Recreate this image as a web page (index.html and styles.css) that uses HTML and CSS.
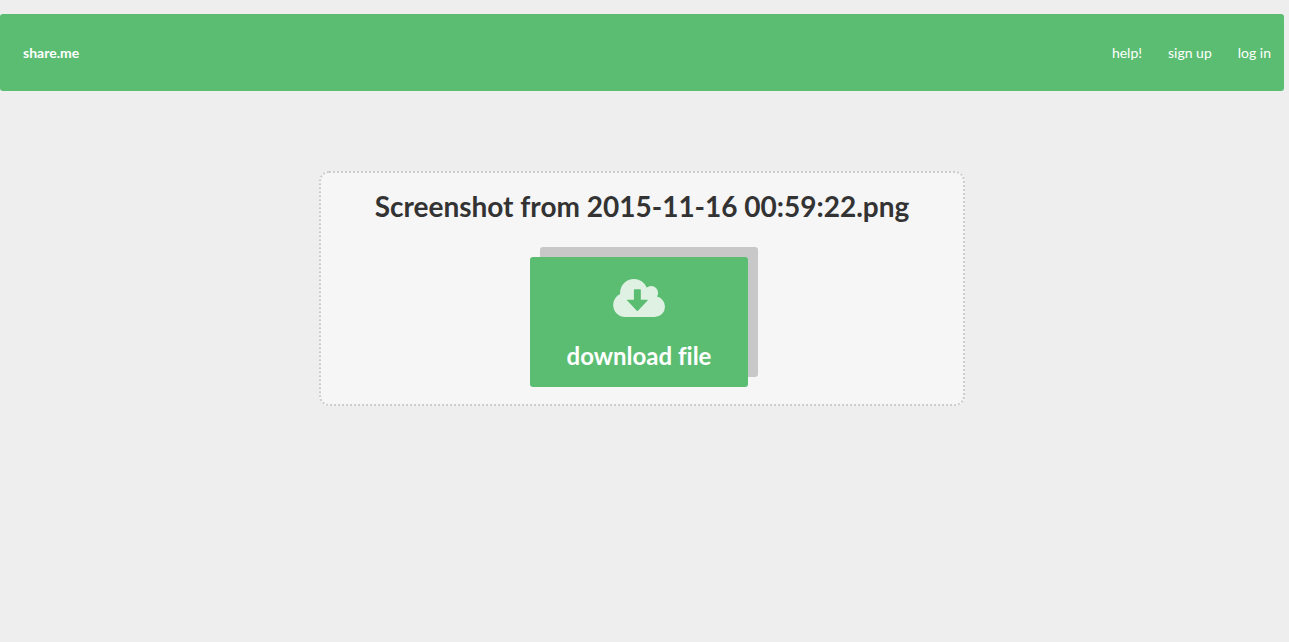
FILE: index.html
```html
<!DOCTYPE html>
<html lang="en">
<head>
<meta charset="utf-8">
<meta name="viewport" content="width=device-width, initial-scale=1">
<title>share.me</title>
<link rel="stylesheet" href="styles.css">
</head>
<body>
<header class="menu">
  <a class="brand" href="#">share.me</a>
  <nav class="links">
    <a class="item" href="#">help!</a>
    <a class="item" href="#">sign up</a>
    <a class="item" href="#">log in</a>
  </nav>
</header>
<main class="panel">
  <h1 class="filename">Screenshot from 2015-11-16 00:59:22.png</h1>
  <button class="download" type="button">
    <svg class="cloud" viewBox="0 128 1920 1408" preserveAspectRatio="xMaxYMid meet" aria-hidden="true">
      <path fill-rule="evenodd" d="M1920 1152q0 159-112.500 271.500t-271.500 112.500h-1088q-185 0-316.500-131.500t-131.500-316.500q0-130 70-240t188-165q-2-30-2-43 0-212 150-362t362-150q156 0 285.500 87t188.500 231q71-62 166-62 106 0 181 75t75 181q0 76-41 138 130 31 213.500 135.500t83.500 238.500zM790 512q-22 0-22 22v362h-236q-40 0-14 32l356 374q22 22 44 0l356-374q26-32-14-32h-236v-362q0-22-22-22z"/>
    </svg>
    <span>download file</span>
  </button>
</main>
</body>
</html>
```
FILE: styles.css
```css
* {
  box-sizing: border-box;
}

body {
  margin: 0;
  padding: 14px 5px 0 0;
  background: #eee;
  color: #333;
  font-family: Lato, "Open Sans", sans-serif;
  font-size: 14px;
  font-variant-ligatures: none;
  line-height: 19px;
}

.menu {
  display: flex;
  align-items: center;
  justify-content: space-between;
  padding: 29px 0 29px 10px;
  border-radius: 3px;
  background: #5bbd72;
}

.brand,
.item {
  padding: 0 13px;
  color: #fff;
  text-decoration: none;
}

.brand {
  font-weight: 700;
}

.links {
  display: flex;
}

.panel {
  box-sizing: content-box;
  display: flex;
  flex-direction: column;
  align-items: center;
  width: 50%;
  margin: 80px auto 0;
  padding: 14px 0 17px;
  border: 2px dotted #ccc;
  border-radius: 10px;
  background: #f6f6f6;
}

.filename {
  margin: 0;
  font-size: 28px;
  font-weight: 700;
  line-height: 38px;
  text-align: center;
}

.download {
  display: flex;
  flex-direction: column;
  align-items: center;
  gap: 24px;
  margin: 32px 6px 0 0;
  padding: 22px 37px 16px;
  border: 0;
  border-radius: 3px;
  background: #5bbd72;
  box-shadow: 10px -10px 0 #c8c8c8;
  color: #fff;
  font-family: inherit;
  font-size: 24px;
  font-variant-ligatures: inherit;
  font-weight: 700;
  line-height: 30px;
  cursor: pointer;
}

.cloud {
  width: 52px;
  height: 38px;
  fill: #fff;
  opacity: 0.8;
}
```
